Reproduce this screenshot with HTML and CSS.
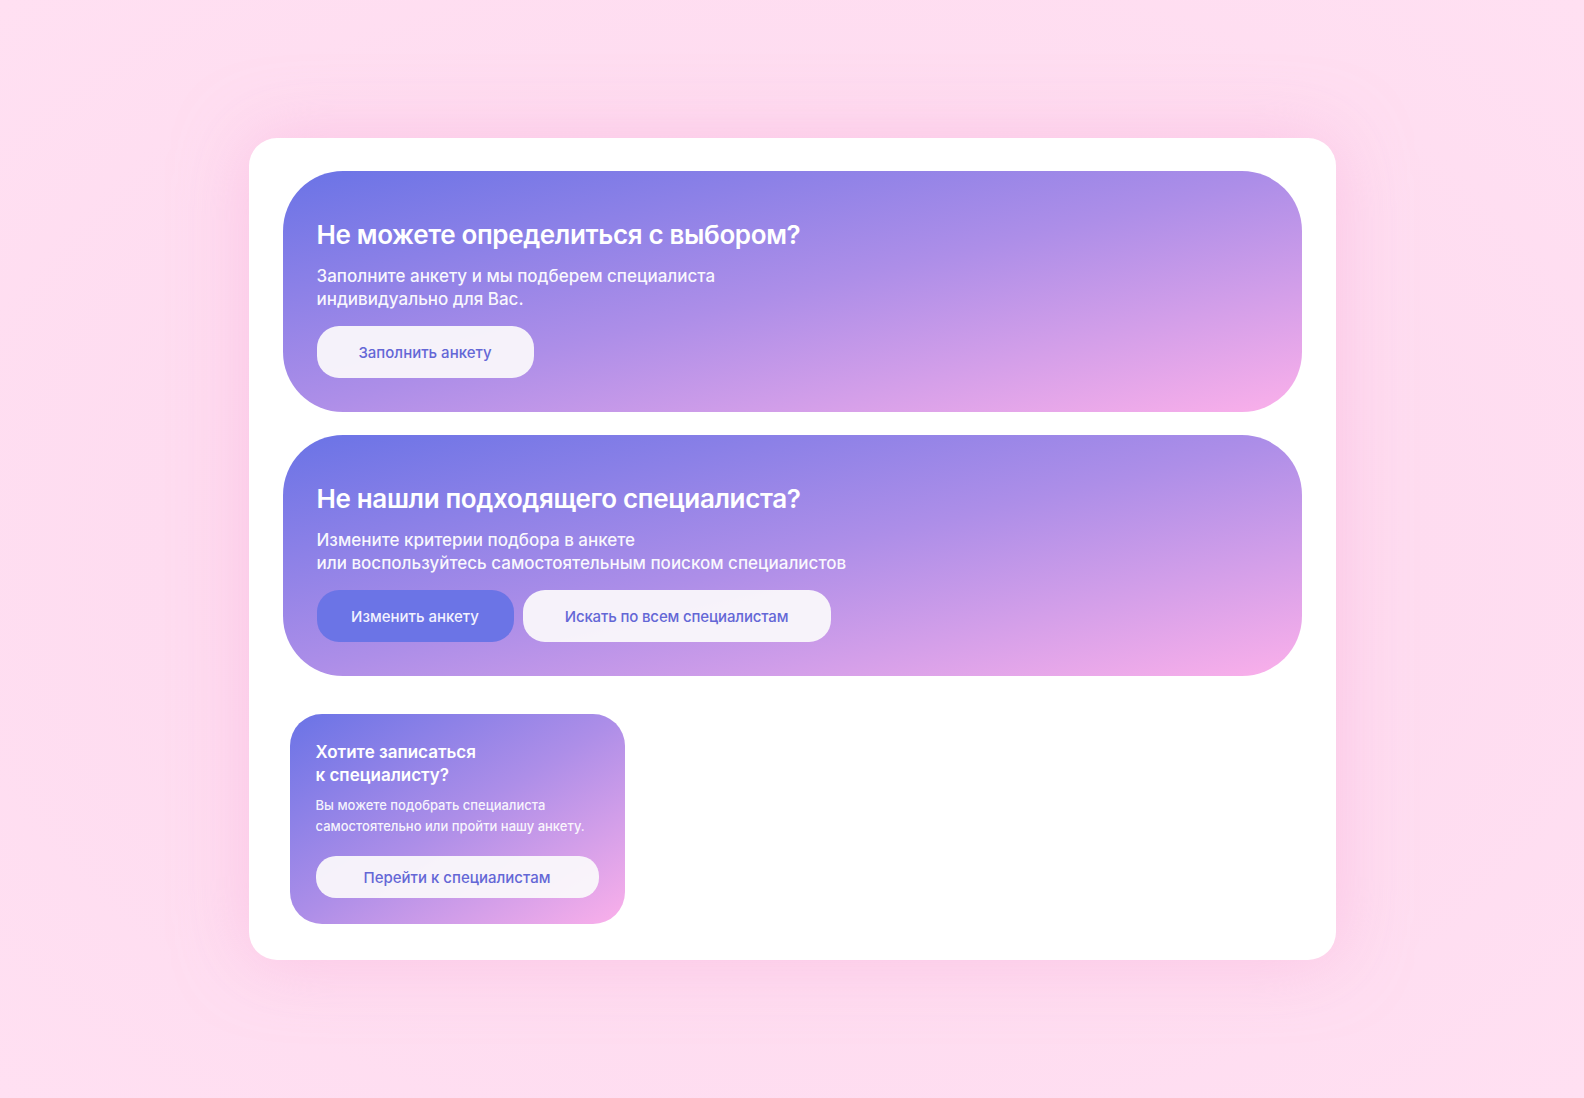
FILE: index.html
```html
<!DOCTYPE html>
<html lang="ru">
<head>
<meta charset="utf-8">
<title>Подбор специалиста</title>
<link rel="stylesheet" href="styles.css">
</head>
<body>
<main class="panel">
  <section class="promo">
    <h2 class="promo-title">Не можете определиться с выбором?</h2>
    <p class="promo-text">Заполните анкету и мы подберем специалиста<br>индивидуально для Вас.</p>
    <div class="promo-actions">
      <button class="btn btn-light btn-fill">Заполнить анкету</button>
    </div>
  </section>
  <section class="promo">
    <h2 class="promo-title">Не нашли подходящего специалиста?</h2>
    <p class="promo-text">Измените критерии подбора в анкете<br>или воспользуйтесь самостоятельным поиском специалистов</p>
    <div class="promo-actions">
      <button class="btn btn-primary btn-edit">Изменить анкету</button>
      <button class="btn btn-light btn-search">Искать по всем специалистам</button>
    </div>
  </section>
  <section class="mini">
    <h3 class="mini-title">Хотите записаться<br>к специалисту?</h3>
    <p class="mini-text">Вы можете подобрать специалиста<br>самостоятельно или пройти нашу анкету.</p>
    <button class="btn btn-light btn-mini">Перейти к специалистам</button>
  </section>
</main>
</body>
</html>
```
FILE: styles.css
```css
* { box-sizing: border-box; }
html, body { margin: 0; padding: 0; }
body {
  min-height: 100vh;
  display: flex;
  align-items: center;
  justify-content: center;
  background: radial-gradient(ellipse at center, #fdd3ea 0%, #fedcf0 55%, #ffe0f2 100%);
  font-family: Inter, "Noto Sans", sans-serif;
}
.panel {
  width: 1087px;
  background: #ffffff;
  border-radius: 28px;
  padding: 33px 34px 36px;
  display: flex;
  flex-direction: column;
  box-shadow: 0 0 70px rgba(250, 175, 218, 0.55);
}
.promo {
  height: 241px;
  border-radius: 60px;
  padding: 47px 34px 34px;
  background: linear-gradient(to bottom right, #6a73e6 0%, #ad8ee8 50%, #fbb0ea 100%);
  color: #ffffff;
}
.promo + .promo { margin-top: 23px; }
.promo-title {
  margin: 0;
  font-size: 26px;
  line-height: 34px;
  font-weight: 600;
  letter-spacing: -0.35px;
}
.promo-text {
  margin: 13px 0 0;
  font-size: 17px;
  line-height: 23px;
  font-weight: 500;
  color: rgba(255,255,255,0.95);
}
.promo-actions {
  margin-top: 15px;
  display: flex;
  gap: 9px;
}
.btn {
  border: none;
  font-family: inherit;
  font-size: 15px;
  font-weight: 500;
  height: 52px;
  border-radius: 22px;
  padding: 0;
  display: flex;
  align-items: center;
  justify-content: center;
}
.btn-light {
  background: rgba(250, 248, 251, 0.95);
  color: #6467d6;
}
.btn-primary {
  background: #6b74e6;
  color: #f2f2ff;
}
.btn-fill { width: 217px; }
.btn-edit { width: 197px; }
.btn-search { width: 308px; letter-spacing: -0.15px; }
.mini {
  margin-top: 38px;
  margin-left: 7px;
  width: 335px;
  height: 210px;
  border-radius: 32px;
  padding: 27px 26px 25px;
  background: linear-gradient(to bottom right, #6a73e6 0%, #ad8ee8 50%, #fbb0ea 100%);
  color: #ffffff;
}
.mini-title {
  margin: 0;
  font-size: 17px;
  line-height: 23px;
  font-weight: 600;
}
.mini-text {
  margin: 8px 0 0;
  font-size: 13px;
  line-height: 21px;
  font-weight: 500;
  color: rgba(255,255,255,0.92);
}
.btn-mini {
  margin-top: 19px;
  width: 283px;
  height: 42px;
  border-radius: 20px;
}
```
